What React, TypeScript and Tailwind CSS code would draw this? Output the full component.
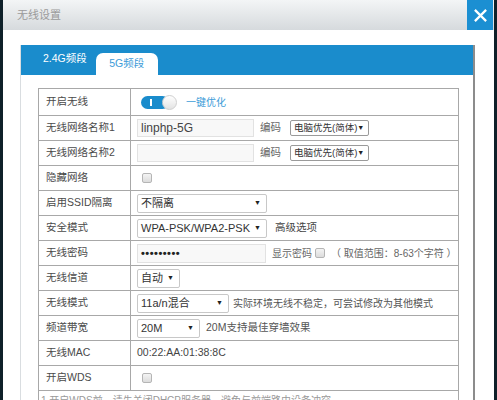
import type { ReactNode } from "react";

const font = { fontFamily: '"Liberation Sans", "Noto Sans CJK SC", sans-serif' };

function Checkbox() {
  return <span className="inline-block h-[10px] w-[10px] shrink-0 rounded-[2px] border border-[#b5b5b5] bg-gradient-to-b from-[#f4f4f4] to-[#dcdcdc]" />;
}

function Select({ value, width, small }: { value: string; width: string; small?: boolean }) {
  return (
    <div
      className={`flex shrink-0 items-center justify-between whitespace-nowrap rounded-[2px] border bg-white pl-[3px] pr-[5px] text-[#333] ${width} ${
        small ? "h-[16px] border-[#9a9a9a] text-[9.5px]" : "h-[19px] border-[#c8c8c8] text-[11px]"
      }`}
    >
      <span>{value}</span>
      <span className="text-[7px] text-[#222]">▼</span>
    </div>
  );
}

function Row({ label, children, first }: { label: string; children?: ReactNode; first?: boolean }) {
  return (
    <div className={`flex border-b border-[#a8a8a8] ${first ? "h-[27px]" : "h-[25px]"}`}>
      <div className="flex w-[92px] shrink-0 items-center whitespace-nowrap border-r border-[#a8a8a8] pl-[7px] text-[10.5px] text-[#4a4a4a]">
        {label}
      </div>
      <div className="flex flex-1 items-center gap-[6px] whitespace-nowrap pl-[6px] text-[10.5px] text-[#444]">{children}</div>
    </div>
  );
}

function Encoding() {
  return (
    <>
      <span className="w-[24px] shrink-0 text-[10.5px] text-[#666]">编码</span>
      <Select value="电脑优先(简体)" width="w-[79px]" small />
    </>
  );
}

export default function App() {
  return (
    <div className="flex h-[400px] w-[497px] overflow-hidden bg-[#0e2029]" style={font}>
      <div className="ml-[3px] flex h-full w-[491px] flex-col bg-white">
        {/* header */}
        <div className="flex h-[30px] shrink-0 items-center justify-between bg-gradient-to-b from-[#f3f5f6] to-[#d6dadd]">
          <span className="pl-[14px] text-[11px] text-[#9a9a9a]">无线设置</span>
          <div className="mr-[1px] flex h-[30px] w-[26px] items-center justify-center bg-[#1b8fd2]">
            <svg width="15" height="15" viewBox="0 0 16 16" fill="none" stroke="white" strokeWidth="2.4">
              <path d="M2 2 L14 14 M14 2 L2 14" />
            </svg>
          </div>
        </div>

        {/* body */}
        <div className="flex-1 pl-[17px] pt-[15px]">
          <div className="flex h-[400px] w-[455px] flex-col border-l border-r-2 border-[#d9dde0] border-r-[#8c8c8c]">
            <div className="flex h-[30px] shrink-0 items-end bg-[#1a8ccc] pl-[22px]">
              <span className="mb-[8px] whitespace-nowrap text-[10.5px] text-white">2.4G频段</span>
              <span className="ml-[9px] flex h-[22px] w-[62px] items-center justify-center whitespace-nowrap rounded-t-[7px] bg-white text-[10.5px] text-[#3d9bd8]">
                5G频段
              </span>
            </div>

            <div className="ml-[17px] mt-[13px] w-[421px] border-l border-r border-t border-[#a8a8a8]">
              <Row label="开启无线" first>
                <div className="relative ml-[4px] h-[13px] w-[36px] shrink-0">
                  <div className="absolute left-0 top-0 flex h-[13px] w-[28px] items-center rounded-full bg-[#1a8ccc] pl-[9px]">
                    <span className="h-[7px] w-[2px] bg-white" />
                  </div>
                  <div className="absolute right-0 top-[-1px] h-[15px] w-[15px] rounded-full border border-[#d0d0d0] bg-gradient-to-b from-white to-[#e3e3e3]" />
                </div>
                <span className="ml-[3px] text-[10px] text-[#3d9bd8]">一键优化</span>
              </Row>
              <Row label="无线网络名称1">
                <div className="flex h-[18px] w-[117px] shrink-0 items-center border border-[#e2e2e2] bg-[#f8f8f8] pl-[3px] text-[12px] text-[#444]">
                  linphp-5G
                </div>
                <Encoding />
              </Row>
              <Row label="无线网络名称2">
                <div className="h-[18px] w-[117px] shrink-0 border border-[#e2e2e2] bg-[#f8f8f8]" />
                <Encoding />
              </Row>
              <Row label="隐藏网络">
                <span className="ml-[5px] flex">
                  <Checkbox />
                </span>
              </Row>
              <Row label="启用SSID隔离">
                <Select value="不隔离" width="w-[130px]" />
              </Row>
              <Row label="安全模式">
                <Select value="WPA-PSK/WPA2-PSK" width="w-[130px]" />
                <span className="ml-[2px] text-[10.5px] text-[#444]">高级选项</span>
              </Row>
              <Row label="无线密码">
                <div className="flex h-[19px] w-[129px] shrink-0 items-center border border-[#e2e2e2] bg-[#f8f8f8] pl-[3px] text-[11px] font-bold tracking-[0.5px] text-[#222]">
                  •••••••••
                </div>
                <span className="flex items-center gap-[3px] text-[10px] text-[#666]">
                  显示密码 <Checkbox />
                </span>
                <span className="text-[10px] text-[#666]">（ 取值范围：8-63个字符 ）</span>
              </Row>
              <Row label="无线信道">
                <Select value="自动" width="w-[43px]" />
              </Row>
              <Row label="无线模式">
                <Select value="11a/n混合" width="w-[92px]" />
                <span className="-ml-[2px] text-[10px] text-[#555]">实际环境无线不稳定，可尝试修改为其他模式</span>
              </Row>
              <Row label="频道带宽">
                <Select value="20M" width="w-[63px]" />
                <span className="text-[10.5px] text-[#555]">20M支持最佳穿墙效果</span>
              </Row>
              <Row label="无线MAC">
                <span className="text-[10.5px] text-[#444]">00:22:AA:01:38:8C</span>
              </Row>
              <Row label="开启WDS">
                <span className="ml-[5px] flex">
                  <Checkbox />
                </span>
              </Row>
              <div className="whitespace-nowrap pl-[2px] pt-[2px] text-[10px] text-[#999]">1.开启WDS前，请先关闭DHCP服务器，避免与前端路由设备冲突</div>
            </div>
          </div>
        </div>
      </div>
    </div>
  );
}
